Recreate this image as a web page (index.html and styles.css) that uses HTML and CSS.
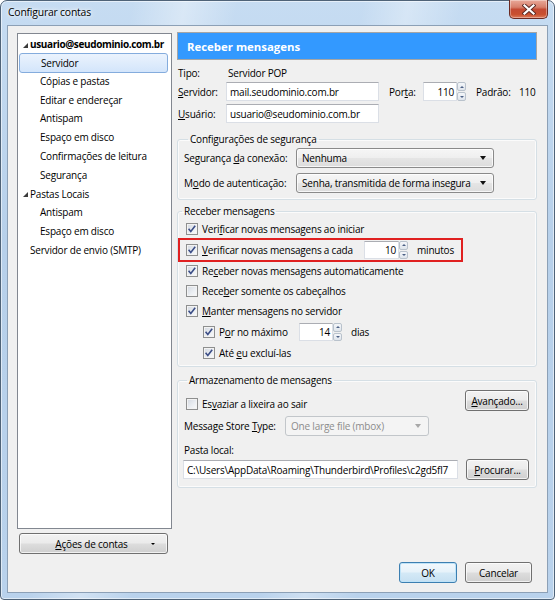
FILE: index.html
```html
<!DOCTYPE html>
<html lang="pt-BR">
<head>
<meta charset="utf-8">
<title>Configurar contas</title>
<link rel="stylesheet" href="styles.css">
</head>
<body>
<div class="window">
  <div class="titlebar">
    <span class="title">Configurar contas</span>
    <div class="close">
      <svg width="14" height="11" viewBox="0 0 14 11"><path d="M2.5 1.5 L11.5 9.5 M11.5 1.5 L2.5 9.5" stroke="#5a2a24" stroke-width="4" stroke-linecap="square"/><path d="M2.5 1.5 L11.5 9.5 M11.5 1.5 L2.5 9.5" stroke="#fff" stroke-width="2.2" stroke-linecap="square"/></svg>
    </div>
  </div>
  <div class="client">
    <div class="main">
      <div class="sidebar">
        <ul class="tree">
          <li class="node top"><span class="twisty"></span><b>usuario@seudominio.com.br</b></li>
          <li class="node sub"><span class="sel">Servidor</span></li>
          <li class="node sub">Cópias e pastas</li>
          <li class="node sub">Editar e endereçar</li>
          <li class="node sub">Antispam</li>
          <li class="node sub">Espaço em disco</li>
          <li class="node sub">Confirmações de leitura</li>
          <li class="node sub">Segurança</li>
          <li class="node top"><span class="twisty"></span>Pastas Locais</li>
          <li class="node sub">Antispam</li>
          <li class="node sub">Espaço em disco</li>
          <li class="node top">Servidor de envio (SMTP)</li>
        </ul>
        <div class="btn actions"><span class="actions-label"><u>A</u>ções de contas</span><span class="mini-arrow"></span></div>
      </div>

      <div class="content">
        <div class="header">Receber mensagens</div>

        <div class="frow r-tipo"><span class="lbl">Tipo:</span><span class="val">Servidor POP</span></div>
        <div class="frow r-server">
          <span class="lbl"><u>S</u>ervidor:</span>
          <span class="input w-server">mail.seudominio.com.br</span>
          <span class="lbl-porta">Por<u>t</u>a:</span>
          <span class="spin"><span class="input num port">110</span><span class="arrows"><span class="up"></span><span class="down"></span></span></span>
          <span class="lbl-padrao">Padrão:</span><span>110</span>
        </div>
        <div class="frow r-user">
          <span class="lbl"><u>U</u>suário:</span>
          <span class="input w-server">usuario@seudominio.com.br</span>
        </div>

        <fieldset class="group g-sec">
          <legend>Configurações de segurança</legend>
          <div class="srow"><span class="slbl">Segurança <u>d</u>a conexão:</span><span class="select w-sel">Nenhuma<span class="arrow"></span></span></div>
          <div class="srow s2"><span class="slbl">M<u>o</u>do de autenticação:</span><span class="select w-sel">Senha, transmitida de forma insegura<span class="arrow"></span></span></div>
        </fieldset>

        <fieldset class="group g-recv">
          <legend>Receber mensagens</legend>
          <div class="crow"><span class="cb on"><svg width="10" height="10" viewBox="0 0 10 10"><path d="M1.6 4.8 L3.8 7.4 L8.2 1.8" fill="none" stroke="#3b4d86" stroke-width="1.6"/></svg></span><span>Veri<u>f</u>icar novas mensagens ao iniciar</span></div>
          <div class="crow hl"><span class="cb on"><svg width="10" height="10" viewBox="0 0 10 10"><path d="M1.6 4.8 L3.8 7.4 L8.2 1.8" fill="none" stroke="#3b4d86" stroke-width="1.6"/></svg></span><span class="l-every"><u>V</u>erificar novas mensagens a cada</span><span class="spin s-min"><span class="input num mins">10</span><span class="arrows"><span class="up"></span><span class="down"></span></span></span><span class="unit">minutos</span></div>
          <div class="crow"><span class="cb on"><svg width="10" height="10" viewBox="0 0 10 10"><path d="M1.6 4.8 L3.8 7.4 L8.2 1.8" fill="none" stroke="#3b4d86" stroke-width="1.6"/></svg></span><span>Re<u>c</u>eber novas mensagens automaticamente</span></div>
          <div class="crow"><span class="cb"></span><span>Rece<u>b</u>er somente os cabeçalhos</span></div>
          <div class="crow"><span class="cb on"><svg width="10" height="10" viewBox="0 0 10 10"><path d="M1.6 4.8 L3.8 7.4 L8.2 1.8" fill="none" stroke="#3b4d86" stroke-width="1.6"/></svg></span><span><u>M</u>anter mensagens no servidor</span></div>
          <div class="crow indent tall"><span class="cb on"><svg width="10" height="10" viewBox="0 0 10 10"><path d="M1.6 4.8 L3.8 7.4 L8.2 1.8" fill="none" stroke="#3b4d86" stroke-width="1.6"/></svg></span><span class="l-max">P<u>o</u>r no máximo</span><span class="spin s-days"><span class="input num days">14</span><span class="arrows"><span class="up"></span><span class="down"></span></span></span><span class="unit">dias</span></div>
          <div class="crow indent"><span class="cb on"><svg width="10" height="10" viewBox="0 0 10 10"><path d="M1.6 4.8 L3.8 7.4 L8.2 1.8" fill="none" stroke="#3b4d86" stroke-width="1.6"/></svg></span><span>Até <u>e</u>u excluí-las</span></div>
        </fieldset>

        <fieldset class="group g-store">
          <legend>Armazenamento de mensagens</legend>
          <div class="arow">
            <div class="empty"><span class="cb"></span><span>Es<u>v</u>aziar a lixeira ao sair</span></div>
            <div class="btn b-adv"><u>A</u>vançado...</div>
          </div>
          <div class="mrow"><span class="mlbl">Message Store <u>T</u>ype:</span><span class="select disabled w-store">One large file (mbox)<span class="arrow"></span></span></div>
          <div class="plbl">Pasta local:</div>
          <div class="prow"><span class="input w-path">C:\Users\AppData\Roaming\Thunderbird\Profiles\c2gd5fl7</span><div class="btn b-proc"><u>P</u>rocurar...</div></div>
        </fieldset>
      </div>
    </div>
    <div class="footer">
      <div class="btn b-ok">OK</div>
      <div class="btn b-cancel">Cancelar</div>
    </div>
  </div>
</div>
</body>
</html>
```

FILE: styles.css
```css
* { box-sizing: border-box; }
html, body { margin: 0; padding: 0; }
body {
  width: 555px; height: 600px; overflow: hidden; background: #fff;
  font-family: "Open Sans", "Noto Sans", sans-serif; font-size: 10px; letter-spacing: -0.2px; color: #000;
}
u { text-decoration: underline; text-underline-offset: 1px; }

.window {
  width: 555px; height: 600px;
  border: 1px solid #4f6378; border-radius: 7px 7px 4px 4px;
  background:
    linear-gradient(100deg, rgba(255,255,255,0) 20%, rgba(255,255,255,0.35) 28%, rgba(255,255,255,0) 36%, rgba(255,255,255,0) 55%, rgba(255,255,255,0.3) 62%, rgba(255,255,255,0) 70%),
    linear-gradient(#c6dcf2, #b7d0ea 40%, #b9d2ec);
  display: flex; flex-direction: column;
  box-shadow: inset 0 0 0 1px rgba(255,255,255,0.55);
}
.titlebar { height: 24px; display: flex; justify-content: space-between; align-items: flex-start; padding-left: 7px; }
.title { margin-top: 4px; font-size: 10.4px; line-height: 14px; color: #000; text-shadow: 0 0 6px #fff, 0 0 3px #fff; }
.close {
  margin-top: -1px; margin-right: 6px; width: 39px; height: 19px;
  border: 1px solid #6b2a22; border-top: none; border-radius: 0 0 5px 5px;
  background: linear-gradient(#e9a99a 0%, #d77f6b 40%, #c44a33 52%, #c9502f 80%, #dd7a5a 100%);
  box-shadow: inset 0 0 0 1px rgba(255,255,255,0.35);
  display: flex; align-items: center; justify-content: center;
}

.client {
  margin: 0 6px 6px 6px; height: 568px;
  border: 1px solid #8ca0b6; background: #f0f0f0;
  padding: 7px 10px 9px 9px;
  display: flex; flex-direction: column;
}
.main { height: 521px; display: flex; gap: 5px; }

.sidebar { width: 155px; display: flex; flex-direction: column; gap: 4px; }
.tree {
  margin: 0; padding: 1.2px 0 0 0; list-style: none;
  height: 496px; background: #fff; border: 1px solid #828790;
}
.node { height: 18.8px; line-height: 18.8px; white-space: nowrap; position: relative; }
.node.top { padding-left: 12px; display: flex; align-items: center; }
.node.top b { font-weight: 700; letter-spacing: -0.38px; }
.node.sub { padding-left: 22px; }
.twisty {
  width: 0; height: 0; margin-left: -7px; margin-right: 2px;
  border-left: 5px solid transparent; border-bottom: 5px solid #3b3b3b;
  margin-top: 2px;
}
.sel {
  display: block; margin: 0 3px 0 -21px; padding-left: 21px;
  height: 20px; line-height: 18px;
  border: 1px solid #84acdd; border-radius: 3px;
  background: linear-gradient(#ebf3fd, #d3e5fb);
  margin-top: -1px;
}

.btn {
  height: 21px; border: 1px solid #707070; border-radius: 3px;
  background: linear-gradient(#f2f2f2 0%, #ebebeb 48%, #dddddd 52%, #cfcfcf 100%);
  box-shadow: inset 0 0 0 1px rgba(255,255,255,0.7);
  display: flex; align-items: center; justify-content: center;
  line-height: 14px; white-space: nowrap;
}
.actions { margin-left: 2px; width: 149px; height: 21px; position: relative; }
.actions-label { margin-left: -4px; }
.mini-arrow {
  position: absolute; right: 12px; top: 9px;
  width: 0; height: 0; border-left: 2px solid transparent; border-right: 2px solid transparent; border-top: 2px solid #000;
}

.content { width: 360px; display: flex; flex-direction: column; }
.header {
  margin-top: -1px; height: 28px;
  border: 1px solid #a5a5a5; background: #3399ff;
  color: #fff; font-weight: 700; font-size: 11.4px; letter-spacing: 0;
  display: flex; align-items: center; padding-left: 9px;
}

.frow { display: flex; align-items: center; white-space: nowrap; }
.r-tipo { margin-top: 4px; height: 18px; }
.r-server { height: 19px; }
.r-user { margin-top: 3px; height: 19px; }
.lbl { width: 49px; padding-left: 1px; flex: none; }
.val { padding-left: 2px; }
.input {
  height: 19px; background: #fff;
  border: 1px solid #dbdfe6; border-top-color: #abadb3;
  display: flex; align-items: center; padding: 0 3px; white-space: nowrap; overflow: hidden;
}
.w-server { width: 153px; }
.lbl-porta { margin-left: 10px; width: 34px; flex: none; }
.lbl-padrao { margin-left: 10px; width: 43px; flex: none; }
.spin { display: flex; height: 19px; flex: none; }
.num { justify-content: flex-end; padding-right: 2px; }
.port { width: 34px; }
.arrows { width: 9px; display: flex; flex-direction: column; gap: 1px; margin-left: 0; }
.arrows span {
  flex: 1; border: 1px solid #b9c2cc; border-radius: 2px;
  background: linear-gradient(#f4f6f9, #dfe5ec);
  display: flex; align-items: center; justify-content: center;
}
.arrows .up::after { content: ''; border-left: 2px solid transparent; border-right: 2px solid transparent; border-bottom: 2px solid #4d6185; }
.arrows .down::after { content: ''; border-left: 2px solid transparent; border-right: 2px solid transparent; border-top: 2px solid #4d6185; }

.group {
  margin: 0; padding: 0; min-width: 0;
  border: 1px solid #d5dfe5; border-radius: 3px;
  box-shadow: inset 0 0 0 1px #fbfbfb;
}
.group legend { padding: 0 2px; margin-left: 4px; height: 14px; line-height: 14px; }

.g-sec { margin-top: 9px; padding: 2px 0 6px 6px; }
.srow { display: flex; align-items: center; height: 20px; }
.srow.s2 { margin-top: 5px; }
.slbl { width: 112px; flex: none; }
.select {
  height: 20px; border: 1px solid #8a8a8a; border-radius: 3px;
  background: linear-gradient(#f6f6f6 0%, #efefef 48%, #e5e5e5 52%, #dcdcdc 100%);
  box-shadow: inset 0 0 0 1px rgba(255,255,255,0.75);
  display: flex; align-items: center; justify-content: space-between;
  padding: 0 7px 0 5px; white-space: nowrap;
}
.w-sel { width: 198px; }
.arrow { width: 0; height: 0; border-left: 3.5px solid transparent; border-right: 3.5px solid transparent; border-top: 4px solid #111; }
.select.disabled {
  background: #f4f4f4; border-color: #c2c6ca; color: #8c8c8c; box-shadow: none;
}
.select.disabled .arrow { border-top-color: #a8a8a8; }

.g-recv { margin-top: 4px; padding: 1px 0 3px 0; }
.crow { display: flex; align-items: center; height: 20px; padding-left: 8px; white-space: nowrap; }
.crow.hl {
  height: 24px; margin: -1px 0 -1px 0; width: 285px;
  border: 2px solid #e02020; padding-left: 6px;
}
.crow.indent { padding-left: 25px; }
.crow.tall { height: 22px; }
.cb {
  width: 12px; height: 12px; flex: none; margin-right: 4px;
  border: 1px solid #8e8f8f;
  background: linear-gradient(135deg, #d3d8e0 0%, #eceff3 60%, #fafafa 100%);
  box-shadow: inset 0 0 0 1px #f3f3f3;
  display: flex; align-items: center; justify-content: center;
}
.l-every { width: 162px; flex: none; }
.mins { width: 35px; }
.s-min { height: 18px; }
.s-min .input { height: 18px; }
.unit { margin-left: 9px; }
.l-max { width: 80px; flex: none; }
.days { width: 34px; height: 18px; }
.s-days { height: 18px; }

.g-store { margin-top: 6px; padding: 0 7px 7px 5px; }
.arow { display: flex; justify-content: space-between; height: 26px; }
.empty { display: flex; align-items: center; align-self: flex-end; height: 18px; padding-left: 3px; }
.b-adv { margin-top: 3px; width: 64px; }
.mrow { display: flex; align-items: center; margin-top: 3px; height: 20px; padding-left: 1px; }
.mlbl { width: 101px; flex: none; }
.w-store { width: 144px; }
.plbl { height: 18px; line-height: 18px; margin-top: 5px; padding-left: 1px; }
.prow { display: flex; justify-content: space-between; align-items: flex-start; height: 21px; }
.w-path { width: 275px; margin-top: 1px; padding-left: 3px; }
.b-proc { width: 63px; }

.footer { margin-top: 8px; height: 21px; display: flex; justify-content: flex-end; gap: 8px; padding-right: 5px; }
.b-ok { width: 58px; border-color: #3c7fb1; box-shadow: inset 0 0 0 1px #bfe3f8; background: linear-gradient(#f2f8fc 0%, #e6f2fa 48%, #d4e9f6 52%, #c6e0f2 100%); }
.b-cancel { width: 67px; }
```
